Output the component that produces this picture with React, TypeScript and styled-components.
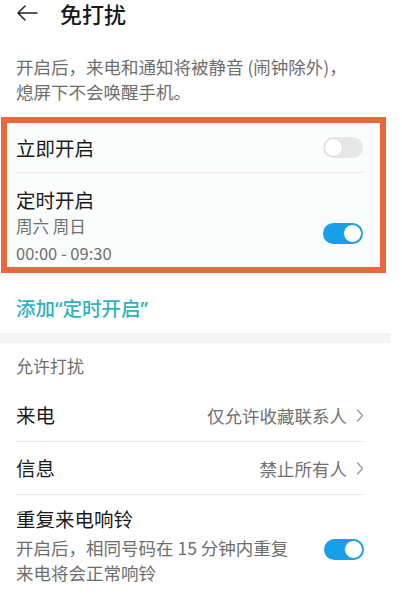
import React from 'react'
import styled, { createGlobalStyle } from 'styled-components'

const GlobalStyle = createGlobalStyle`
  html, body {
    margin: 0;
    padding: 0;
    background: #ffffff;
  }
  body {
    font-family: 'Noto Sans CJK SC', 'Noto Sans', sans-serif;
    color: #1c1c1c;
  }
`

// Style
const Page = styled.div`
  width: 402px;
  height: 602px;
  overflow: hidden;
  background: #ffffff;
`

const Header = styled.div`
  height: 26px;
  display: flex;
  align-items: center;
  gap: 22px;
  padding-left: 16px;
`

const Title = styled.div`
  font-size: 22px;
  font-weight: 500;
  line-height: 26px;
  color: #1a1a1a;
`

const Desc = styled.div`
  padding: 28px 30px 0 16px;
  font-size: 17.5px;
  line-height: 25px;
  color: #6e6e6e;
`

const Highlight = styled.div`
  margin: 13px 0 0 1px;
  width: 373px;
  border: 6px solid #e9693f;
  background: #fbfcfc;
`

const Row = styled.div<{ $h?: number }>`
  display: flex;
  align-items: center;
  justify-content: space-between;
  min-height: ${(p) => (p.$h ? `${p.$h}px` : 'auto')};
`

const BoxRow = styled(Row)`
  padding: 0 17px 0 9px;
`

const BoxTallRow = styled(BoxRow)`
  padding-top: 14px;
`

const Label = styled.div`
  font-size: 19.5px;
  line-height: 26px;
  color: #1a1a1a;
`

const Sub = styled.div`
  font-size: 16.5px;
  line-height: 27px;
  color: #6e6e6e;
`

const Divider = styled.div<{ $inset: number; $right: number }>`
  height: 1px;
  background: #ececec;
  margin: 0 ${(p) => p.$right}px 0 ${(p) => p.$inset}px;
`

const Track = styled.div<{ $on: boolean; $shift?: number }>`
  flex: none;
  position: relative;
  width: 40px;
  height: 21px;
  border-radius: 11px;
  background: ${(p) => (p.$on ? '#17a0e9' : '#e6e7e7')};
  margin-top: ${(p) => p.$shift || 0}px;
`

const Knob = styled.div<{ $on: boolean }>`
  position: absolute;
  top: 1px;
  left: ${(p) => (p.$on ? '20px' : '1px')};
  width: 17px;
  height: 17px;
  border-radius: 50%;
  background: #ffffff;
  border: 1px solid ${(p) => (p.$on ? '#17a0e9' : '#d9dada')};
`

const AddLink = styled.div`
  padding: 23px 16px 12px;
  font-size: 19.5px;
  font-weight: 500;
  line-height: 24px;
  color: #2fb2c2;
`

const Quote = styled.span`
  font-family: 'Noto Sans', sans-serif;
`

const Band = styled.div`
  width: 390px;
  height: 10px;
  background: #f4f4f4;
`

const SectionTitle = styled.div`
  padding: 11px 16px 11px;
  font-size: 17px;
  line-height: 24px;
  color: #6e6e6e;
`

const List = styled.div`
  padding: 0 38px 0 16px;
`

const Value = styled.div`
  display: flex;
  align-items: center;
  gap: 9px;
  font-size: 17.5px;
  color: #707070;
`

const LongRow = styled(Row)`
  padding-top: 11px;
`

const LongText = styled.div`
  width: 295px;
`

const LongSub = styled.div`
  margin-top: 3px;
  font-size: 17.5px;
  line-height: 25px;
  color: #6e6e6e;
`

// Component
const BackArrow = () => (
  <svg width='22' height='16' viewBox='0 0 22 16' fill='none'>
    <path
      d='M21 8H2M9 1L2 8l7 7'
      stroke='#222'
      strokeWidth='1.5'
      strokeLinecap='round'
      strokeLinejoin='round'
    />
  </svg>
)

const Chevron = () => (
  <svg width='8' height='13' viewBox='0 0 8 13' fill='none'>
    <path
      d='M1.5 1l5 5.5-5 5.5'
      stroke='#9a9a9a'
      strokeWidth='1.3'
      strokeLinecap='round'
      strokeLinejoin='round'
    />
  </svg>
)

const Switch = ({ on, shift }: { on: boolean; shift?: number }) => (
  <Track $on={on} $shift={shift}>
    <Knob $on={on} />
  </Track>
)

const App = () => {
  return (
    <Page>
      <GlobalStyle />
      <Header>
        <BackArrow />
        <Title>免打扰</Title>
      </Header>

      <Desc>
        开启后，来电和通知将被静音 (闹钟除外)，
        <br />
        熄屏下不会唤醒手机。
      </Desc>

      <Highlight>
        <BoxRow $h={49}>
          <Label>立即开启</Label>
          <Switch on={false} />
        </BoxRow>
        <Divider $inset={9} $right={16} />
        <BoxTallRow>
          <div>
            <Label>定时开启</Label>
            <Sub>周六 周日</Sub>
            <Sub>00:00 - 09:30</Sub>
          </div>
          <Switch on shift={12} />
        </BoxTallRow>
      </Highlight>

      <AddLink>
        添加<Quote>“</Quote>定时开启<Quote>”</Quote>
      </AddLink>
      <Band />
      <SectionTitle>允许打扰</SectionTitle>

      <List>
        <Row $h={52}>
          <Label>来电</Label>
          <Value>
            仅允许收藏联系人
            <Chevron />
          </Value>
        </Row>
        <Divider $inset={0} $right={0} />
        <Row $h={52}>
          <Label>信息</Label>
          <Value>
            禁止所有人
            <Chevron />
          </Value>
        </Row>
        <Divider $inset={0} $right={0} />
        <LongRow>
          <LongText>
            <Label>重复来电响铃</Label>
            <LongSub>
              开启后，相同号码在 15 分钟内重复
              <br />
              来电将会正常响铃
            </LongSub>
          </LongText>
          <Switch on shift={8} />
        </LongRow>
      </List>
    </Page>
  )
}

export default App
